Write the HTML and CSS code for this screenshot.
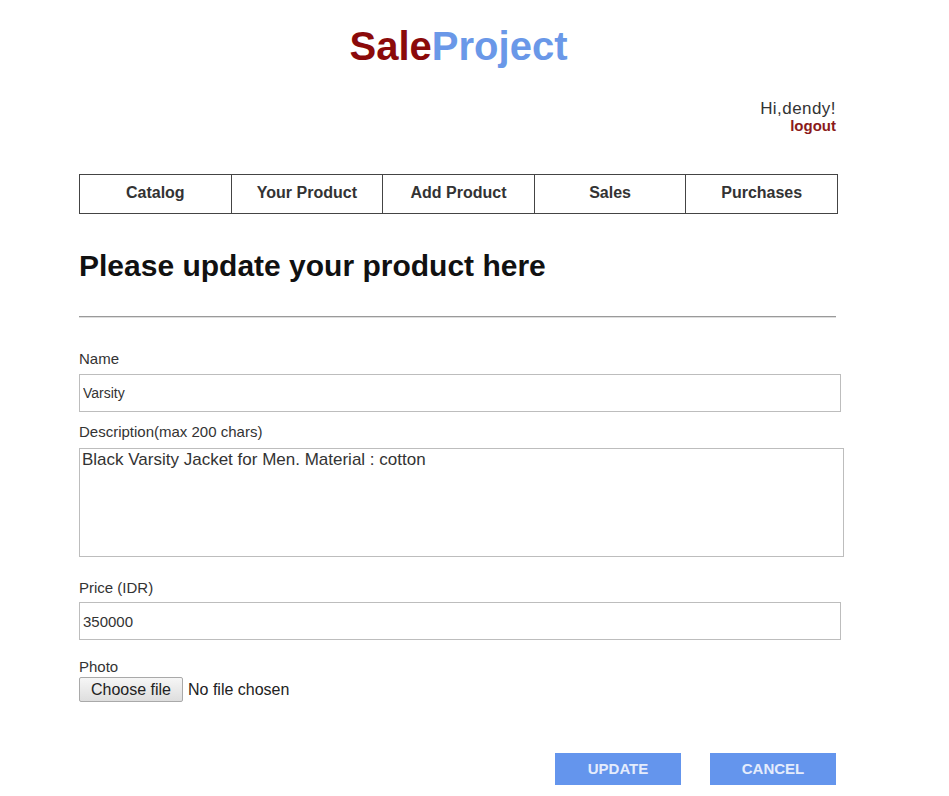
FILE: index.html
```html
<!DOCTYPE html>
<html lang="en">
<head>
<meta charset="utf-8">
<title>SaleProject - Edit Product</title>
<link rel="stylesheet" href="styles.css">
</head>
<body>
<div class="page">
  <h1 class="logo"><span class="logo-sale">Sale</span><span class="logo-project">Project</span></h1>
  <div class="user">
    <div class="greet">Hi,dendy!</div>
    <a class="logout" href="#">logout</a>
  </div>
  <nav class="menu">
    <a class="menu-item" href="#">Catalog</a>
    <a class="menu-item" href="#">Your Product</a>
    <a class="menu-item" href="#">Add Product</a>
    <a class="menu-item" href="#">Sales</a>
    <a class="menu-item" href="#">Purchases</a>
  </nav>
  <h2 class="heading">Please update your product here</h2>
  <div class="rule"></div>
  <form class="form">
    <label class="label label-first">Name</label>
    <input class="field" type="text" value="Varsity">
    <label class="label label-desc">Description(max 200 chars)</label>
    <textarea class="area">Black Varsity Jacket for Men. Material : cotton</textarea>
    <label class="label label-price">Price (IDR)</label>
    <input class="field field-price" type="text" value="350000">
    <label class="label label-photo">Photo</label>
    <div class="file">
      <button type="button" class="file-btn">Choose file</button>
      <span class="file-text">No file chosen</span>
    </div>
    <div class="actions">
      <button type="button" class="action">UPDATE</button>
      <button type="button" class="action">CANCEL</button>
    </div>
  </form>
</div>
</body>
</html>
```

FILE: styles.css
```css
html, body {
  margin: 0;
  padding: 0;
  background: #ffffff;
}
body {
  font-family: "Liberation Sans", Arial, sans-serif;
  color: #333;
}
.page {
  width: 759px;
  margin-left: 79px;
  padding-bottom: 10px;
}
.logo {
  margin: 23px 0 0 0;
  font-size: 40px;
  line-height: 46px;
  font-weight: bold;
  text-align: center;
}
.logo-sale { color: #8b0a0a; }
.logo-project { color: #6a98e8; }

.user {
  margin-top: 31px;
  margin-right: 2px;
  text-align: right;
}
.greet {
  font-size: 17px;
  line-height: 18px;
  letter-spacing: 0.45px;
  color: #333;
}
.logout {
  display: block;
  font-size: 15px;
  line-height: 15px;
  font-weight: bold;
  color: #8b1a1a;
  text-decoration: none;
}

.menu {
  display: flex;
  margin-top: 41px;
  border: 1px solid #444;
  height: 38px;
}
.menu-item {
  flex: 1;
  text-align: center;
  font-size: 16px;
  font-weight: bold;
  line-height: 36px;
  color: #333;
  text-decoration: none;
  border-left: 1px solid #444;
}
.menu-item:first-child { border-left: none; }

.heading {
  margin: 35px 0 0 0;
  font-size: 30px;
  line-height: 34px;
  font-weight: bold;
  color: #111;
}
.rule {
  margin-top: 33px;
  width: 757px;
  height: 0;
  border-top: 1px solid #9a9a9a;
  border-bottom: 1px solid #dedede;
}

.form {
  display: flex;
  flex-direction: column;
}
.label {
  display: block;
  font-size: 15px;
  line-height: 17px;
  color: #333;
}
.label-first { margin-top: 32px; }
.label-desc { margin-top: 11px; }
.label-price { margin-top: 22px; }
.label-photo { margin-top: 18px; }

.field {
  box-sizing: border-box;
  display: block;
  width: 762px;
  height: 38px;
  margin: 7px 0 0 0;
  padding: 0 3px;
  border: 1px solid #bdbdbd;
  border-radius: 0;
  font-family: "Liberation Sans", Arial, sans-serif;
  font-size: 14px;
  color: #333;
  outline: none;
}
.field-price {
  margin-top: 6px;
  font-size: 15px;
}
.area {
  box-sizing: border-box;
  display: block;
  width: 765px;
  height: 109px;
  margin: 8px 0 0 0;
  padding: 2px 2px 0 2px;
  border: 1px solid #bdbdbd;
  border-radius: 0;
  font-family: "Liberation Sans", Arial, sans-serif;
  font-size: 17px;
  line-height: 18px;
  color: #333;
  resize: none;
  outline: none;
}

.file {
  display: flex;
  align-items: center;
  margin-top: 2px;
}
.file-btn {
  box-sizing: border-box;
  width: 104px;
  height: 25px;
  padding: 0;
  border: 1px solid #a9a9a9;
  border-radius: 2px;
  background: linear-gradient(#f6f6f6, #dedede);
  font-family: "Liberation Sans", Arial, sans-serif;
  font-size: 16px;
  color: #222;
}
.file-text {
  margin-left: 5px;
  font-size: 16px;
  color: #222;
}

.actions {
  display: flex;
  justify-content: flex-end;
  gap: 29px;
  margin-top: 51px;
  margin-right: 2px;
}
.action {
  width: 126px;
  height: 32px;
  padding: 0;
  border: none;
  background: #6495ed;
  color: #e4ecfc;
  font-family: "Liberation Sans", Arial, sans-serif;
  font-size: 15px;
  font-weight: bold;
  line-height: 32px;
}
```
